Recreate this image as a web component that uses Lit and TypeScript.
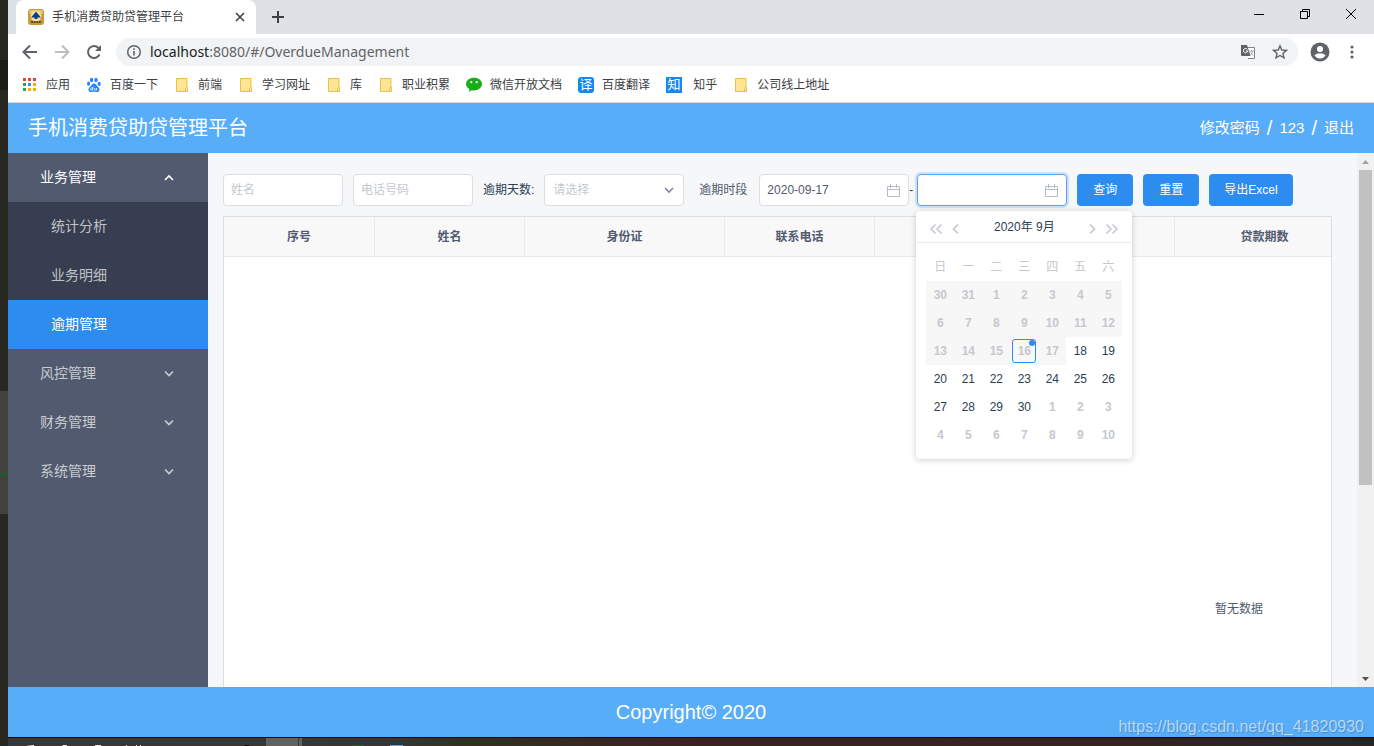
import { LitElement, html, css, svg, nothing } from "lit";
import { customElement } from "lit/decorators.js";
import { classMap } from "lit/directives/class-map.js";

const reset = css`
  *,
  *::before,
  *::after {
    box-sizing: border-box;
  }
  button {
    font: inherit;
    color: inherit;
    margin: 0;
    padding: 0;
    border: 0;
    background: none;
    cursor: pointer;
  }
  a {
    color: inherit;
    text-decoration: none;
  }
  svg {
    display: block;
    flex: none;
  }
`;

const chevron = (d: string) =>
  svg`<path d=${d} fill="none" stroke="currentColor" stroke-width="1.6" />`;

const folderIcon = html`<svg width="16" height="16" viewBox="0 0 16 16">
  <path d="M2.500 1.500h10.500v13H2.500z" fill="#ffe591" stroke="#e8c24b" />
  <path d="M11.500 14.500v-3l1-1h1v4z" fill="#ffe591" stroke="#e8c24b" />
</svg>`;

const appsIcon = html`<svg width="16" height="16" viewBox="0 0 16 16">
  <path d="M1 1h3v3H1zM6 1h3v3H6zM11 1h3v3h-3z" fill="#ea4335" />
  <path d="M1 6h3v3H1z" fill="#34a053" />
  <path d="M6 6h3v3H6z" fill="#4285f4" />
  <path d="M11 6h3v3h-3z" fill="#f9ab00" />
  <path d="M1 11h3v3H1z" fill="#34a053" />
  <path d="M6 11h3v3H6zM11 11h3v3h-3z" fill="#f9ab00" />
</svg>`;

const pawIcon = html`<svg width="16" height="16" viewBox="0 0 16 16">
  <g fill="#2f85f7">
    <ellipse cx="5.600" cy="3" rx="1.700" ry="2.300" />
    <ellipse cx="10" cy="3" rx="1.700" ry="2.300" />
    <ellipse cx="2.600" cy="6.700" rx="1.600" ry="2.100" />
    <ellipse cx="13.200" cy="6.900" rx="1.600" ry="2.100" />
    <path d="M8 6.500c2 0 2.400 1.800 3.700 2.900 1.400 1.200 2.200 2.300 1.700 4-.5 1.600-2 1.900-3.400 1.600-1.500-.3-2.600-.3-4 0-1.500.3-3 0-3.400-1.600-.5-1.700.3-2.800 1.700-4C5.600 8.300 6 6.500 8 6.500z" />
  </g>
  <path d="M6.800 9.700v3.500H5.600a1 1 0 0 1 0-2.200h1.200M8.700 11v1.500q0 .8 1.800.7V11" fill="none" stroke="#fff" stroke-width=".8" />
</svg>`;

const wechatIcon = html`<svg width="16" height="16" viewBox="0 0 16 16">
  <path d="M8 .8c4.400 0 8 2.700 8 6.300s-3.600 6.400-8 6.400c-.9 0-1.700-.1-2.500-.3L3 15l.4-2.900C1.300 11 0 9.200 0 7.100 0 3.500 3.600.8 8 .8z" fill="#1aad19" />
  <circle cx="5.300" cy="5.200" r="1.100" fill="#fff" />
  <circle cx="10.700" cy="5.200" r="1.100" fill="#fff" />
</svg>`;

@customElement("browser-chrome")
class BrowserChrome extends LitElement {
  static styles = [
    reset,
    css`
      :host {
        display: block;
        color: #3c4043;
        font: 12px/16px "Noto Sans", "Noto Sans CJK SC", sans-serif;
      }
      .tabs {
        display: flex;
        height: 34px;
        padding-left: 8px;
        background: #dee1e6;
      }
      .tab {
        display: flex;
        align-items: center;
        width: 240px;
        padding: 0 10px 0 12px;
        gap: 8px;
        background: #fff;
        border-radius: 8px 8px 0 0;
      }
      .tab-title {
        flex: 1;
        white-space: nowrap;
      }
      .new-tab {
        width: 44px;
        display: grid;
        place-items: center;
      }
      .window-buttons {
        display: flex;
        margin-left: auto;
      }
      .window-buttons button {
        width: 46px;
        height: 28px;
        display: grid;
        place-items: center;
      }
      .toolbar {
        display: flex;
        align-items: center;
        height: 36px;
        padding: 0 14px;
        background: #fff;
        color: #5f6368;
      }
      .nav {
        display: flex;
        gap: 16px;
      }
      .nav .off {
        color: #bbbdc0;
      }
      .address {
        flex: 1;
        display: flex;
        align-items: center;
        height: 28px;
        margin: 0 12px 0 14px;
        padding: 0 10px;
        gap: 16px;
        border-radius: 14px;
        background: #f1f3f4;
      }
      .url {
        flex: 1;
        margin-left: -8px;
        font-size: 14px;
        line-height: 20px;
      }
      .host {
        color: #202124;
      }
      .actions {
        display: flex;
        align-items: center;
        gap: 14px;
      }
      .bookmarks {
        display: flex;
        align-items: center;
        gap: 16px;
        height: 33px;
        padding: 0 14px 3px;
        background: #fff;
        border-bottom: 1px solid #d5d8dc;
      }
      .bookmarks a {
        display: flex;
        align-items: center;
        gap: 8px;
        white-space: pre;
      }
      .badge {
        width: 16px;
        height: 16px;
        background: #1388f5;
        color: #fff;
        font-size: 13px;
        line-height: 14px;
        text-align: center;
      }
      .badge.round {
        border-radius: 3px;
      }
    `,
  ];

  render() {
    const links: [unknown, string][] = [
      [appsIcon, "应用"],
      [pawIcon, "百度一下"],
      [folderIcon, "前端"],
      [folderIcon, "学习网址"],
      [folderIcon, "库"],
      [folderIcon, "职业积累"],
      [wechatIcon, "微信开放文档"],
      [html`<span class="badge round">译</span>`, "百度翻译"],
      [html`<span class="badge">知</span>`, " 知乎"],
      [folderIcon, "公司线上地址"],
    ];
    return html`
      <div class="tabs">
        <div class="tab">
          <svg width="16" height="16" viewBox="0 0 16 16">
            <rect width="16" height="16" rx="3" fill="#c79a35" />
            <rect x="1" y="1" width="14" height="4" rx="2" fill="#e5c56b" />
            <circle cx="8" cy="7" r="5.500" fill="#f2dfa4" />
            <path d="M8 2.500l2 2.500 3 3.500H9.500V10h-3V8.500H3L6 5z" fill="#123f8c" />
            <path d="M3 13h10" stroke="#5c4a24" stroke-width="2" stroke-dasharray="2 .6" />
          </svg>
          <span class="tab-title">手机消费贷助贷管理平台</span>
          <button aria-label="关闭标签页">
            <svg width="12" height="12" viewBox="0 0 12 12">
              <path d="M2 2l8 8M10 2l-8 8" stroke="#3c4043" stroke-width="1.600" />
            </svg>
          </button>
        </div>
        <button class="new-tab" aria-label="新标签页">
          <svg width="14" height="14" viewBox="0 0 14 14">
            <path d="M7 1v12M1 7h12" stroke="#3c4043" stroke-width="2" />
          </svg>
        </button>
        <div class="window-buttons">
          <button aria-label="最小化">
            <svg width="10" height="10"><path d="M0 5.500h10" stroke="#000" /></svg>
          </button>
          <button aria-label="还原">
            <svg width="10" height="10" fill="none" stroke="#000">
              <path d="M.5 2.500h7v7h-7zM2.500 2.500v-2h7v7h-2" />
            </svg>
          </button>
          <button aria-label="关闭">
            <svg width="10" height="10"><path d="M0 0l10 10M10 0L0 10" stroke="#000" /></svg>
          </button>
        </div>
      </div>
      <div class="toolbar">
        <div class="nav">
          <button aria-label="后退">
            <svg width="16" height="16" fill="none" stroke="currentColor" stroke-width="2">
              <path d="M15 8H2M8 1.500L1.500 8 8 14.500" />
            </svg>
          </button>
          <button class="off" aria-label="前进">
            <svg width="16" height="16" fill="none" stroke="currentColor" stroke-width="2">
              <path d="M1 8h13M8 1.500L14.500 8 8 14.500" />
            </svg>
          </button>
          <button aria-label="刷新">
            <svg width="16" height="16" fill="none">
              <path d="M13.500 10.500A6 6 0 1 1 12.500 4" stroke="currentColor" stroke-width="2" />
              <path d="M15 1v6H9z" fill="currentColor" />
            </svg>
          </button>
        </div>
        <div class="address">
          <svg width="16" height="16" fill="none" stroke="currentColor">
            <circle cx="8" cy="8" r="6.300" stroke-width="1.500" />
            <path d="M8 7v4.500M8 4.300v1.600" stroke-width="1.600" />
          </svg>
          <span class="url"><span class="host">localhost</span>:8080/#/OverdueManagement</span>
          <svg width="16" height="16">
            <path d="M6 3.500h8.500v11H8" fill="#fff" stroke="#80848a" />
            <path d="M1 1h6l3.500 11H2a1 1 0 0 1-1-1z" fill="#5f6368" />
            <path d="M7.500 5.500A2.200 2.200 0 1 0 7.800 7H5.800" fill="none" stroke="#fff" />
            <path d="M9.500 7h4M11.500 6v1M12.800 7.500q-.6 2-2.300 3M10.500 8.500l2.500 3" fill="none" stroke="#80848a" stroke-width=".8" />
          </svg>
          <svg width="16" height="16" fill="none" stroke="currentColor" stroke-width="1.400">
            <path d="M8 1.800l1.800 4.200 4.600.4-3.500 3 1.100 4.500L8 11.500l-4 2.400 1.100-4.500-3.500-3 4.600-.4z" />
          </svg>
        </div>
        <div class="actions">
          <svg width="20" height="20">
            <circle cx="10" cy="10" r="9.500" fill="#5f6368" />
            <circle cx="10" cy="7" r="3" fill="#fff" />
            <path d="M4.300 13.500q2-2.300 5.700-2.300t5.700 2.300q-2 2.900-5.700 2.900t-5.700-2.900z" fill="#fff" />
          </svg>
          <svg width="16" height="16" fill="currentColor">
            <circle cx="8" cy="3" r="1.600" />
            <circle cx="8" cy="8" r="1.600" />
            <circle cx="8" cy="13" r="1.600" />
          </svg>
        </div>
      </div>
      <nav class="bookmarks">
        ${links.map(([icon, text]) => html`<a href="#">${icon}<span>${text}</span></a>`)}
      </nav>
    `;
  }
}

@customElement("side-menu")
class SideMenu extends LitElement {
  static styles = [
    reset,
    css`
      :host {
        display: block;
        flex: 0 0 200px;
        background: #515a6e;
        color: rgba(255, 255, 255, 0.7);
        font-size: 14px;
        line-height: 21px;
      }
      .group {
        display: flex;
        align-items: center;
        justify-content: space-between;
        width: 100%;
        height: 49px;
        padding: 0 34px 0 32px;
      }
      .open {
        color: #fff;
      }
      .item {
        display: flex;
        align-items: center;
        height: 49px;
        padding-left: 43px;
        background: #363e4f;
      }
      .active {
        background: #2d8cf0;
        color: #fff;
      }
    `,
  ];

  render() {
    const groups = [
      { name: "业务管理", items: ["统计分析", "业务明细", "逾期管理"] },
      { name: "风控管理", items: [] },
      { name: "财务管理", items: [] },
      { name: "系统管理", items: [] },
    ];
    return groups.map((group) => {
      const open = group.items.length > 0;
      return html`
        <button class=${classMap({ group: true, open })} aria-expanded=${open}>
          <span>${group.name}</span>
          <svg width="10" height="10">
            ${chevron(open ? "M1 7l4-4 4 4" : "M1 2.500l4 4 4-4")}
          </svg>
        </button>
        ${group.items.map(
          (item) => html`<a
            href="#"
            class=${classMap({ item: true, active: item === "逾期管理" })}
            >${item}</a
          >`,
        )}
      `;
    });
  }
}

@customElement("month-calendar")
class MonthCalendar extends LitElement {
  static styles = [
    reset,
    css`
      :host {
        display: block;
        width: 216px;
        background: #fff;
        border-radius: 4px;
        box-shadow: 0 1px 6px rgba(0, 0, 0, 0.2);
        color: #2c3e50;
        font-size: 12px;
        line-height: 18px;
      }
      .head {
        display: grid;
        grid-template-columns: 20px 20px 1fr 20px 20px;
        align-items: center;
        height: 32px;
        padding: 0 10px;
        border-bottom: 1px solid #e8eaec;
        text-align: center;
      }
      .head button {
        display: grid;
        place-items: center;
        height: 32px;
        padding-top: 4px;
        color: #c5c8ce;
      }
      table {
        margin: 10px;
        border-collapse: collapse;
      }
      th,
      td {
        width: 28px;
        height: 28px;
        padding: 0;
        font-weight: 400;
        text-align: center;
      }
      th {
        color: #c5c8ce;
      }
      td button {
        display: block;
        width: 24px;
        height: 24px;
        margin: 2px;
        border: 1px solid transparent;
        border-radius: 3px;
        line-height: 22px;
      }
      .muted {
        color: #c5c8ce;
        font-weight: 700;
      }
      .disabled {
        background: #f7f7f7;
      }
      td .today {
        position: relative;
        border-color: #2d8cf0;
      }
      .today::after {
        content: "";
        position: absolute;
        top: 0;
        right: 0;
        width: 6px;
        height: 6px;
        border-radius: 50%;
        background: #2d8cf0;
      }
    `,
  ];

  render() {
    const first = new Date(2020, 7, 30);
    const weeks = [0, 1, 2, 3, 4, 5].map((w) =>
      [0, 1, 2, 3, 4, 5, 6].map((d) => {
        const date = new Date(first);
        date.setDate(first.getDate() + w * 7 + d);
        return date;
      }),
    );
    const minDate = new Date(2020, 8, 18);
    return html`
      <div class="head">
        <button aria-label="上一年">
          <svg width="14" height="12">${chevron("M6.500 1.500L2 6l4.500 4.500M12.500 1.500L8 6l4.500 4.500")}</svg>
        </button>
        <button aria-label="上个月">
          <svg width="8" height="12">${chevron("M6 1.500L1.500 6 6 10.500")}</svg>
        </button>
        <span>2020年 9月</span>
        <button aria-label="下个月">
          <svg width="8" height="12">${chevron("M2 1.500L6.500 6 2 10.500")}</svg>
        </button>
        <button aria-label="下一年">
          <svg width="14" height="12">${chevron("M1.500 1.500L6 6l-4.500 4.500M7.500 1.500L12 6l-4.500 4.500")}</svg>
        </button>
      </div>
      <table>
        <thead>
          <tr>
            ${[..."日一二三四五六"].map((day) => html`<th scope="col">${day}</th>`)}
          </tr>
        </thead>
        <tbody>
          ${weeks.map(
            (week) => html`<tr>
              ${week.map((date) => {
                const disabled = date < minDate;
                const muted = disabled || date.getMonth() !== 8;
                const today = date.getMonth() === 8 && date.getDate() === 16;
                return html`<td class=${classMap({ disabled, muted })}>
                  <button class=${classMap({ today })}>${date.getDate()}</button>
                </td>`;
              })}
            </tr>`,
          )}
        </tbody>
      </table>
    `;
  }
}

@customElement("overdue-page")
class OverduePage extends LitElement {
  static styles = [
    reset,
    css`
      :host {
        display: block;
        flex: 1;
        min-width: 0;
        overflow: hidden;
        padding: 21px 25px 0 15px;
        background: #f5f7f9;
        font-size: 12px;
        line-height: 18px;
      }
      .filters {
        display: flex;
        align-items: center;
        gap: 10px;
        margin-bottom: 10px;
      }
      .filters label {
        color: #2c3e50;
        white-space: nowrap;
      }
      .filters .period {
        margin: 0 2px 0 5px;
        color: #515a6e;
      }
      input,
      select {
        display: block;
        width: 100%;
        height: 32px;
        margin: 0;
        padding: 0 7px;
        border: 1px solid #dcdee2;
        border-radius: 4px;
        background: #fff;
        color: #515a6e;
        font: inherit;
        outline: 0;
        appearance: none;
      }
      select {
        padding: 0 8px;
      }
      input::placeholder,
      select {
        color: #c5c8ce;
      }
      .text {
        flex: 0 0 120px;
      }
      .field {
        display: grid;
        align-items: center;
        flex: 0 0 150px;
      }
      .field.pick {
        flex-basis: 140px;
      }
      .field > input,
      .field > select,
      .field > svg {
        grid-area: 1 / 1;
      }
      .field > svg {
        justify-self: end;
        margin-right: 9px;
        color: #808695;
        pointer-events: none;
      }
      .range {
        display: flex;
        align-items: center;
        color: #2c3e50;
      }
      .dash {
        width: 8px;
      }
      .end {
        position: relative;
      }
      .end input {
        border-color: #57a3f3;
        box-shadow: 0 0 0 2px rgba(45, 140, 240, 0.2);
      }
      month-calendar {
        position: absolute;
        top: 37px;
        left: -1px;
        z-index: 1;
      }
      .primary {
        height: 32px;
        padding: 0 15px;
        border-radius: 4px;
        background: #2d8cf0;
        color: #fff;
        white-space: nowrap;
      }
      .primary.small {
        width: 56px;
      }
      .frame {
        overflow: hidden;
        border: 1px solid #dcdee2;
        background: #fff;
      }
      table {
        width: 2030px;
        table-layout: fixed;
        border-collapse: separate;
        border-spacing: 0;
        color: #515a6e;
      }
      th {
        height: 40px;
        padding: 0;
        background: #f8f8f9;
        border-right: 1px solid #e8eaec;
        border-bottom: 1px solid #e8eaec;
        font-weight: 700;
      }
      .w150 {
        width: 151px;
      }
      .m150 {
        width: 150px;
      }
      .w180 {
        width: 180px;
      }
      .w200 {
        width: 200px;
      }
      .empty {
        height: 704px;
        padding: 0;
        text-align: center;
      }
    `,
  ];

  render() {
    const columns = [
      ["序号", "w150"],
      ["姓名", "m150"],
      ["身份证", "w200"],
      ["联系电话", "m150"],
      ["", "m150"],
      ["", "m150"],
      ["贷款期数", "w180"],
      ["", ""],
    ];
    const calendarIcon = html`<svg width="13" height="13" fill="none" stroke="#b6bac2">
      <path d="M.5 2.500h12v10H.5zM.5 5.500h12M3.500 0v4M9.500 0v4" />
    </svg>`;
    return html`
      <form class="filters">
        <input class="text" aria-label="姓名" placeholder="姓名" />
        <input class="text" aria-label="电话号码" placeholder="电话号码" />
        <label for="days">逾期天数:</label>
        <div class="field pick">
          <select id="days">
            <option>请选择</option>
          </select>
          <svg width="12" height="10">${chevron("M2 3l4 4 4-4")}</svg>
        </div>
        <label class="period" for="from">逾期时段</label>
        <div class="range">
          <div class="field">
            <input id="from" value="2020-09-17" />
            ${calendarIcon}
          </div>
          <span class="dash">-</span>
          <div class="field end">
            <input aria-label="结束日期" />
            ${calendarIcon}
            <month-calendar></month-calendar>
          </div>
        </div>
        <button type="button" class="primary small">查询</button>
        <button type="button" class="primary small">重置</button>
        <button type="button" class="primary">导出Excel</button>
      </form>
      <div class="frame">
        <table>
          <thead>
            <tr>
              ${columns.map(([name, width]) => html`<th scope="col" class=${width || nothing}>${name}</th>`)}
            </tr>
          </thead>
          <tbody>
            <tr>
              <td class="empty" colspan="8">暂无数据</td>
            </tr>
          </tbody>
        </table>
      </div>
    `;
  }
}

@customElement("app-root")
class AppRoot extends LitElement {
  static styles = [
    reset,
    css`
      :host {
        display: grid;
        grid-template-columns: 8px minmax(0, 1fr);
        height: 100vh;
        overflow: hidden;
        font-family: "Liberation Sans", "Noto Sans CJK SC", sans-serif;
      }
      .edge {
        background: linear-gradient(
          #272822 60px,
          #1c1d19 60px 90px,
          #272822 90px 391px,
          #42433c 391px 473px,
          #1f5a35 473px 476px,
          #42433c 476px 514px,
          #272822 514px
        );
      }
      .window {
        display: flex;
        flex-direction: column;
        height: 100vh;
      }
      .header {
        display: flex;
        align-items: center;
        justify-content: space-between;
        flex: none;
        height: 50px;
        padding: 0 20px;
        background: #58adf9;
        color: #fff;
      }
      .title {
        margin: 0;
        font-size: 20px;
        font-weight: 400;
        line-height: 30px;
      }
      .account {
        display: flex;
        align-items: center;
        gap: 7px;
        font-size: 15px;
        line-height: 22px;
      }
      .slash {
        font-size: 20px;
      }
      .body {
        display: flex;
        flex: 1;
        min-height: 0;
      }
      .scrollbar {
        display: flex;
        flex-direction: column;
        align-items: center;
        flex: 0 0 17px;
        background: #f1f1f1;
      }
      .arrow {
        display: grid;
        place-items: center;
        width: 17px;
        height: 17px;
      }
      .track {
        flex: 1;
        width: 13px;
      }
      .thumb {
        height: 63%;
        background: #c1c1c1;
      }
      .footer {
        position: relative;
        display: grid;
        place-items: center;
        flex: none;
        height: 50px;
        background: #58adf9;
        color: #fff;
        font-size: 20px;
        line-height: 24px;
      }
      .watermark {
        position: absolute;
        right: 10px;
        bottom: 0;
        color: rgba(255, 255, 255, 0.6);
        text-shadow: 1px 1px 1px rgba(0, 0, 0, 0.2);
        font-size: 16px;
        line-height: 20px;
      }
      .taskbar {
        flex: none;
        height: 9px;
        border-top: 1px solid #05070a;
        background: linear-gradient(90deg, #383838, #363735 28%, #30301f 34%, #3a2322 48%, #35231f 80%, #262626);
      }
    `,
  ];

  render() {
    return html`
      <div class="edge"></div>
      <div class="window">
        <browser-chrome></browser-chrome>
        <header class="header">
          <h1 class="title">手机消费贷助贷管理平台</h1>
          <div class="account">
            <a href="#">修改密码</a><span class="slash">/</span><span>123</span
            ><span class="slash">/</span><a href="#">退出</a>
          </div>
        </header>
        <div class="body">
          <side-menu></side-menu>
          <overdue-page></overdue-page>
          <div class="scrollbar">
            <span class="arrow"><svg width="7" height="4"><path d="M0 4l3.500-4L7 4z" fill="#a3a3a3" /></svg></span>
            <div class="track"><div class="thumb"></div></div>
            <span class="arrow"><svg width="7" height="4"><path d="M0 0l3.500 4L7 0z" fill="#505050" /></svg></span>
          </div>
        </div>
        <footer class="footer">
          <span>Copyright© 2020</span>
          <span class="watermark">https://blog.csdn.net/qq_41820930</span>
        </footer>
        <div class="taskbar">
          <svg width="400" height="8">
            <path d="M258 0h32v8h-32zM291 0h3v8h-3z" fill="#62625f" />
            <path d="M18 8l7-1h1v1zM54 8l1-1h4v1zM87 7h6v1h-6zM118 7h1v1h-1zM128 7h1v1h-1zM132 7h1v1h-1z" fill="#e8e8e8" />
            <path d="M236 8q3-2 6 0z" fill="#000" />
            <path d="M344 7h12v1h-12z" fill="#235b33" />
            <path d="M382 7h13v1h-13z" fill="#5aa5e8" />
          </svg>
        </div>
      </div>
    `;
  }
}
